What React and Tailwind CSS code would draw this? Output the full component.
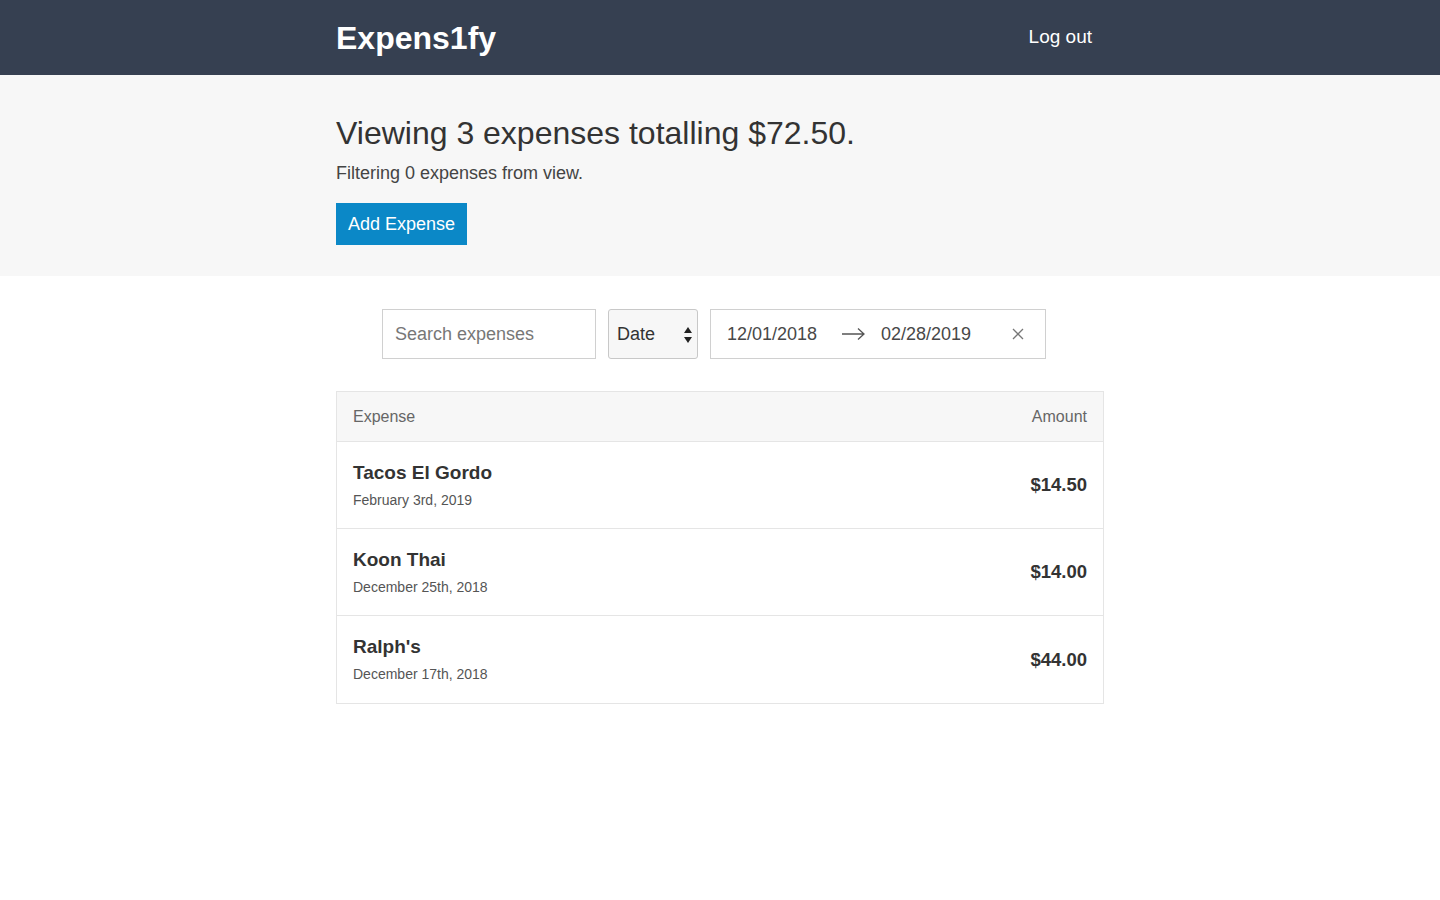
import React from "react";

const expenses = [
  { id: 1, description: "Tacos El Gordo", date: "February 3rd, 2019", amount: "$14.50" },
  { id: 2, description: "Koon Thai", date: "December 25th, 2018", amount: "$14.00" },
  { id: 3, description: "Ralph's", date: "December 17th, 2018", amount: "$44.00" },
];

export default function App() {
  return (
    <div className="min-h-screen bg-white text-[#333] font-['Liberation_Sans',Arial,sans-serif]">
      {/* header */}
      <header className="h-[75px] bg-[#364051]">
        <div className="mx-auto flex h-full w-[768px] items-center justify-between">
          <h1 className="text-[32px] font-bold leading-none text-white">Expens1fy</h1>
          <button className="pr-3 text-[19px] text-white">Log out</button>
        </div>
      </header>

      {/* summary */}
      <div className="bg-[#f7f7f7] pt-[38px] pb-[31px]">
        <div className="mx-auto w-[768px]">
          <h2 className="text-[32px] font-light leading-[40px]">
            Viewing 3 expenses totalling $72.50.
          </h2>
          <p className="mt-[9px] text-[18px] leading-[22px] text-[#444]">Filtering 0 expenses from view.</p>
          <button className="mt-[19px] h-[42px] bg-[#0b88c7] px-3 text-[18px] text-white">Add Expense</button>
        </div>
      </div>

      {/* filters */}
      <div className="mx-auto w-[768px] pt-[33px]">
        <div className="flex justify-center gap-3 pr-[12px]">
          <input
            placeholder="Search expenses"
            className="h-[50px] w-[214px] border border-[#d0d0d0] px-3 text-[18px] placeholder:text-[#777] outline-none"
          />
          <div className="relative flex h-[50px] w-[90px] items-center rounded-[3px] border border-[#c8c8c8] bg-[#f7f7f7] px-2 text-[18px]">
            Date
            <svg className="absolute right-[4px] top-[16px]" width="10" height="18" viewBox="0 0 10 18">
              <path d="M5 1 L9 7 L1 7 Z" fill="#222" />
              <path d="M5 17 L9 11 L1 11 Z" fill="#222" />
            </svg>
          </div>
          <div className="flex h-[50px] w-[336px] items-center border border-[#d0d0d0] pl-4 text-[18px] text-[#484848]">
            <span className="w-[110px]">12/01/2018</span>
            <svg width="26" height="14" viewBox="0 0 26 14" className="ml-[4px]">
              <path d="M1 7 H23 M17 1.5 L23 7 L17 12.5" stroke="#555" strokeWidth="1.3" fill="none" />
            </svg>
            <span className="ml-[14px] w-[118px]">02/28/2019</span>
            <svg width="14" height="14" viewBox="0 0 14 14" className="ml-[12px]">
              <path d="M2 2 L12 12 M12 2 L2 12" stroke="#777" strokeWidth="1.3" />
            </svg>
          </div>
        </div>

        {/* list */}
        <div className="mt-[32px] border border-[#e5e5e5]">
          <div className="flex h-[50px] items-center justify-between border-b border-[#e5e5e5] bg-[#f7f7f7] px-4 text-[16px] text-[#666]">
            <span>Expense</span>
            <span>Amount</span>
          </div>
          {expenses.map((e, i) => (
            <div
              key={e.id}
              className={`flex h-[87px] items-center justify-between px-4 ${i < expenses.length - 1 ? "border-b border-[#e5e5e5]" : ""}`}
            >
              <div className="pt-[2px]">
                <h3 className="text-[19px] font-bold leading-[22px]">{e.description}</h3>
                <span className="mt-[6px] block text-[14px] text-[#555]">{e.date}</span>
              </div>
              <h3 className="text-[18.5px] font-bold">{e.amount}</h3>
            </div>
          ))}
        </div>
      </div>
    </div>
  );
}
